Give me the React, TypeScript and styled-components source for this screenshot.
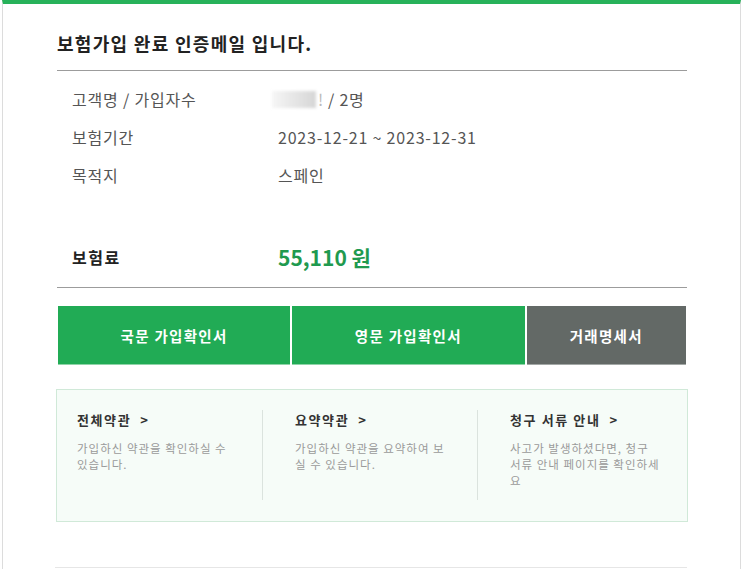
import React from "react";
import styled, { createGlobalStyle } from "styled-components";

const Global = createGlobalStyle`
  html, body { margin: 0; padding: 0; background: #fff; }
  body { font-family: "Noto Sans CJK KR", "Noto Sans", sans-serif; }
  * { box-sizing: border-box; }
`;

const Frame = styled.div`
  margin: 0 2px;
  min-height: 569px;
  border-top: 4px solid #27b25a;
  border-left: 1px solid #dcdcdc;
  border-right: 1px solid #dcdcdc;
  padding: 0 53px 0 54px;
`;

const Title = styled.h1`
  margin: 0;
  padding: 26px 0 14px;
  font-size: 18px;
  line-height: 26px;
  font-weight: 700;
  color: #222;
  letter-spacing: 1.3px;
  border-bottom: 1px solid #9c9c9c;
`;

const InfoList = styled.div`
  padding: 9px 0 0 15px;
`;

const InfoRow = styled.div`
  display: grid;
  grid-template-columns: 206px 1fr;
  height: 38px;
  align-items: center;
  font-size: 16px;
  letter-spacing: 0.8px;
  color: #555;
`;

const Label = styled.div``;
const Value = styled.div`
  display: flex;
  align-items: center;
`;

const Masked = styled.span`
  display: inline-block;
  width: 44px;
  height: 17px;
  margin-left: -6px;
  margin-right: 2px;
  background: linear-gradient(to right, #f6f6f6, #d6d6d6);
  filter: blur(1.5px);
`;

const Faint = styled.span`
  color: #bbb;
  margin-right: 4px;
`;

const Premium = styled.div`
  display: grid;
  grid-template-columns: 206px 1fr;
  align-items: center;
  height: 40px;
  margin-top: 43px;
  padding-left: 15px;
  box-sizing: content-box;
  padding-bottom: 10px;
  border-bottom: 1px solid #9c9c9c;
`;

const PremiumLabel = styled.div`
  font-size: 16px;
  letter-spacing: 1.5px;
  font-weight: 700;
  color: #222;
`;

const PremiumValue = styled.div`
  font-size: 21px;
  font-weight: 700;
  color: #1f9a4f;
`;

const ButtonRow = styled.div`
  display: flex;
  gap: 2px;
  margin-top: 18px;
  padding: 0 1px;
`;

const DocButton = styled.button<{ $gray?: boolean; $w: number }>`
  width: ${(p) => p.$w}px;
  height: 59px;
  border: 0;
  border-bottom: 1px solid ${(p) => (p.$gray ? "#a3a8a6" : "#8fd4a8")};
  background: ${(p) => (p.$gray ? "#636966" : "#21ab55")};
  color: #fff;
  font-family: inherit;
  font-size: 14.5px;
  letter-spacing: 1.3px;
  font-weight: 700;
  padding: 0;
  cursor: pointer;
`;

const GuideBox = styled.div`
  margin-top: 24px;
  display: grid;
  grid-template-columns: 185px 215px 1fr;
  padding: 20px 20px 21px;
  background: #f6fcf8;
  border: 1px solid #d0e9d8;
  margin-left: -1px;
  margin-right: -1px;
`;

const GuideCol = styled.div<{ $first?: boolean }>`
  height: 90px;
  padding-left: ${(p) => (p.$first ? 0 : 32)}px;
  border-left: ${(p) => (p.$first ? "none" : "1px solid #dbe3de")};
`;

const GuideHead = styled.div`
  font-size: 13px;
  letter-spacing: 1.6px;
  line-height: 20px;
  font-weight: 700;
  color: #333;
`;

const Arrow = styled.span`
  margin-left: 9px;
  font-weight: 700;
`;

const GuideDesc = styled.p`
  margin: 10px 0 0;
  max-width: 158px;
  font-size: 11.5px;
  letter-spacing: 1px;
  line-height: 16px;
  color: #9a9a9a;
  word-break: break-all;
  white-space: pre-line;
`;

const BottomRule = styled.div`
  margin-top: 45px;
  margin-left: -2px;
  border-top: 1px solid #e6e6e6;
`;

const guides = [
  { head: "전체약관", desc: "가입하신 약관을 확인하실 수 있습니다." },
  { head: "요약약관", desc: "가입하신 약관을 요약하여 보실 수 있습니다." },
  { head: "청구 서류 안내", desc: "사고가 발생하셨다면, 청구\n서류 안내 페이지를 확인하세요" },
];

export default function App() {
  return (
    <>
      <Global />
      <Frame>
        <Title>보험가입 완료 인증메일 입니다.</Title>
        <InfoList>
          <InfoRow>
            <Label>고객명 / 가입자수</Label>
            <Value>
              <Masked />
              <Faint>!</Faint>/ 2명
            </Value>
          </InfoRow>
          <InfoRow>
            <Label>보험기간</Label>
            <Value>2023-12-21 ~ 2023-12-31</Value>
          </InfoRow>
          <InfoRow>
            <Label>목적지</Label>
            <Value>스페인</Value>
          </InfoRow>
        </InfoList>
        <Premium>
          <PremiumLabel>보험료</PremiumLabel>
          <PremiumValue>55,110 원</PremiumValue>
        </Premium>
        <ButtonRow>
          <DocButton $w={233}>국문 가입확인서</DocButton>
          <DocButton $w={233}>영문 가입확인서</DocButton>
          <DocButton $w={160} $gray>거래명세서</DocButton>
        </ButtonRow>
        <GuideBox>
          {guides.map((g, i) => (
            <GuideCol key={g.head} $first={i === 0}>
              <GuideHead>
                {g.head}
                <Arrow>&gt;</Arrow>
              </GuideHead>
              <GuideDesc>{g.desc}</GuideDesc>
            </GuideCol>
          ))}
        </GuideBox>
        <BottomRule />
      </Frame>
    </>
  );
}
